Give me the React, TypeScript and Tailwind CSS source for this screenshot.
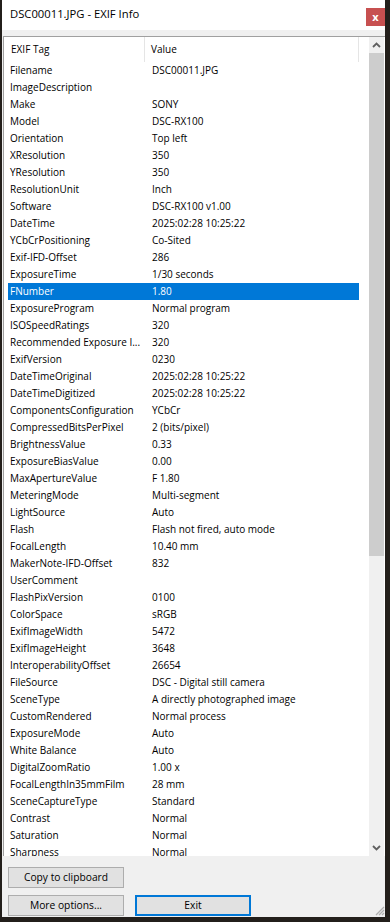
import React from "react";

const rows: [string, string][] = [
  ["Filename", "DSC00011.JPG"],
  ["ImageDescription", ""],
  ["Make", "SONY"],
  ["Model", "DSC-RX100"],
  ["Orientation", "Top left"],
  ["XResolution", "350"],
  ["YResolution", "350"],
  ["ResolutionUnit", "Inch"],
  ["Software", "DSC-RX100 v1.00"],
  ["DateTime", "2025:02:28 10:25:22"],
  ["YCbCrPositioning", "Co-Sited"],
  ["Exif-IFD-Offset", "286"],
  ["ExposureTime", "1/30 seconds"],
  ["FNumber", "1.80"],
  ["ExposureProgram", "Normal program"],
  ["ISOSpeedRatings", "320"],
  ["Recommended Exposure I...", "320"],
  ["ExifVersion", "0230"],
  ["DateTimeOriginal", "2025:02:28 10:25:22"],
  ["DateTimeDigitized", "2025:02:28 10:25:22"],
  ["ComponentsConfiguration", "YCbCr"],
  ["CompressedBitsPerPixel", "2 (bits/pixel)"],
  ["BrightnessValue", "0.33"],
  ["ExposureBiasValue", "0.00"],
  ["MaxApertureValue", "F 1.80"],
  ["MeteringMode", "Multi-segment"],
  ["LightSource", "Auto"],
  ["Flash", "Flash not fired, auto mode"],
  ["FocalLength", "10.40 mm"],
  ["MakerNote-IFD-Offset", "832"],
  ["UserComment", ""],
  ["FlashPixVersion", "0100"],
  ["ColorSpace", "sRGB"],
  ["ExifImageWidth", "5472"],
  ["ExifImageHeight", "3648"],
  ["InteroperabilityOffset", "26654"],
  ["FileSource", "DSC - Digital still camera"],
  ["SceneType", "A directly photographed image"],
  ["CustomRendered", "Normal process"],
  ["ExposureMode", "Auto"],
  ["White Balance", "Auto"],
  ["DigitalZoomRatio", "1.00 x"],
  ["FocalLengthIn35mmFilm", "28 mm"],
  ["SceneCaptureType", "Standard"],
  ["Contrast", "Normal"],
  ["Saturation", "Normal"],
  ["Sharpness", "Normal"],
];

const Chevron = ({ up }: { up?: boolean }) => (
  <svg width="9" height="6" viewBox="0 0 9 6">
    <polyline
      points={up ? "1,5 4.5,1.5 8,5" : "1,1 4.5,4.5 8,1"}
      fill="none"
      stroke="#606060"
      strokeWidth="1.8"
    />
  </svg>
);

const App = () => {
  return (
    <div
      className="w-[390px] h-[922px] bg-[#231f1b] flex overflow-hidden"
      style={{ fontFamily: '"Open Sans", sans-serif' }}
    >
      <div className="ml-[2px] w-[383px] h-[917px] bg-[#f0f0f0] flex flex-col">
        {/* title bar */}
        <div className="h-[30px] bg-white flex items-start shrink-0">
          <span className="ml-[8px] mt-[6px] text-[11.25px] text-black">
            DSC00011.JPG - EXIF Info
          </span>
          <div className="ml-auto mt-[8px] w-[19px] h-[18px] bg-[#c75050] flex items-center justify-center text-white text-[11px] font-bold leading-none pb-[2px]">
            x
          </div>
        </div>

        {/* list */}
        <div className="mt-[6px] ml-[1px] h-[820px] bg-white border-t border-l border-[#a0a0a0] flex overflow-hidden">
          <div className="flex-1 pl-[4px] overflow-hidden text-[10px] text-black">
            <div className="h-[25px] flex">
              <div className="w-[137px] pl-[3px] flex items-center border-r border-[#e5e5e5]">
                EXIF Tag
              </div>
              <div className="w-[214px] pl-[6px] flex items-center border-r border-[#e5e5e5]">
                Value
              </div>
            </div>
            {rows.map(([tag, val], i) => (
              <div
                key={tag}
                className={`h-[17px] w-[351px] flex items-center whitespace-nowrap ${
                  i === 13 ? "bg-[#0078d7] text-white" : ""
                }`}
              >
                <div className="w-[137px] pl-[2px]">{tag}</div>
                <div className="pl-[7px]">{val}</div>
              </div>
            ))}
          </div>
          <div className="w-[15px] mr-[1px] bg-[#f0f0f0] flex flex-col">
            <div className="h-[16px] flex items-center justify-center">
              <Chevron up />
            </div>
            <div className="h-[503px] bg-[#cdcdcd]" />
            <div className="flex-1" />
            <div className="h-[16px] flex items-center justify-center">
              <Chevron />
            </div>
          </div>
        </div>

        {/* buttons */}
        <div className="flex-1 flex flex-col pl-[6px] text-[10.25px] text-black">
          <button className="mt-[11px] w-[116px] h-[21px] bg-[#e1e1e1] border border-[#adadad] flex items-center justify-center">
            Copy to clipboard
          </button>
          <div className="mt-[7px] flex items-end">
            <button className="w-[116px] h-[21px] bg-[#e1e1e1] border border-[#adadad] flex items-center justify-center">
              More options...
            </button>
            <button className="ml-[11px] w-[116px] h-[21px] bg-[#e1e1e1] border-2 border-[#0078d7] flex items-center justify-center">
              Exit
            </button>
            <svg className="ml-auto" width="11" height="11" viewBox="0 0 11 11">
              <g stroke="#b0b0b0" strokeWidth="1.2">
                <line x1="10" y1="2" x2="2" y2="10" />
                <line x1="10" y1="5" x2="5" y2="10" />
                <line x1="10" y1="8" x2="8" y2="10" />
              </g>
            </svg>
          </div>
        </div>
      </div>
    </div>
  );
};

export default App;
